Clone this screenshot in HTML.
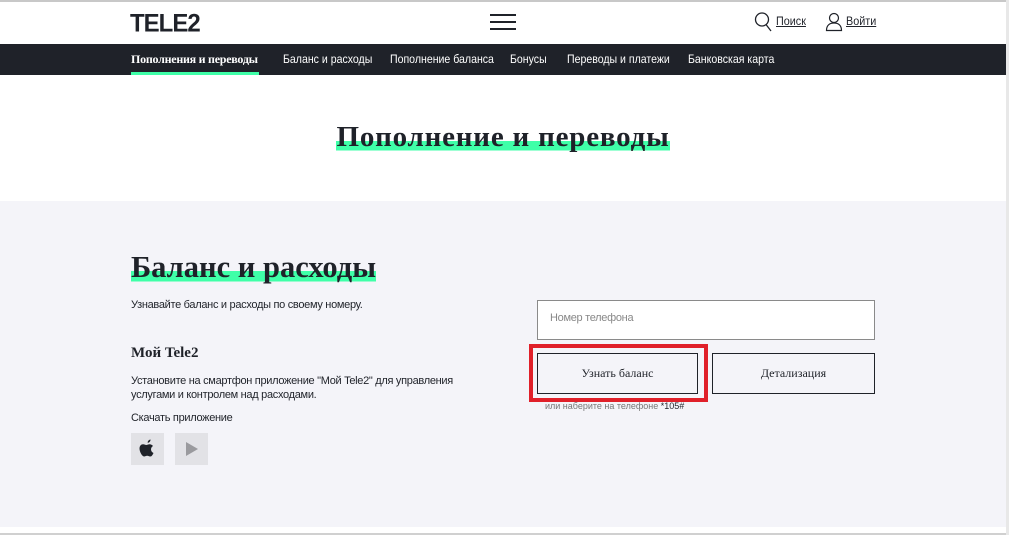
<!DOCTYPE html>
<html><head><meta charset="utf-8"><style>
*{margin:0;padding:0;box-sizing:border-box}
body{width:1009px;height:535px;overflow:hidden;background:#fff;font-family:"Liberation Sans",sans-serif;color:#1f2229;position:relative}
.a{position:absolute}
.hl{background:linear-gradient(to bottom,transparent 62%,#3fffa8 62%,#3fffa8 92%,transparent 92%)}
.serif{font-family:"Liberation Serif",serif;font-weight:bold}
.nav span{position:absolute;top:52px;font-size:12px;color:#fff;transform:scaleX(0.88);transform-origin:left top;white-space:nowrap}
</style></head><body>
<div class="a" style="left:0;top:0;width:1009px;height:2px;background:#c8c8c8"></div>
<div class="a" style="left:1006px;top:0;width:3px;height:535px;background:#e8e8e8"></div>
<div class="a" style="left:130px;top:10px;font-size:24px;font-weight:900;letter-spacing:-1px;color:#1f2229;transform:scaleY(1.05)">TELE2</div>
<div class="a" style="left:490px;top:14px;width:26px;height:2px;background:#1f2229"></div>
<div class="a" style="left:490px;top:21px;width:26px;height:2px;background:#1f2229"></div>
<div class="a" style="left:490px;top:28px;width:26px;height:2px;background:#1f2229"></div>
<svg class="a" style="left:753px;top:11px" width="20" height="22" viewBox="0 0 20 22"><circle cx="9" cy="8.5" r="6.5" fill="none" stroke="#1f2229" stroke-width="1.3"/><line x1="13" y1="13.5" x2="18" y2="20" stroke="#1f2229" stroke-width="1.3"/></svg>
<div class="a" style="left:776px;top:14px;font-size:12px;text-decoration:underline;transform:scaleX(0.9);transform-origin:left">Поиск</div>
<svg class="a" style="left:825px;top:12px" width="18" height="20" viewBox="0 0 18 20"><circle cx="9" cy="6" r="4.5" fill="none" stroke="#1f2229" stroke-width="1.2"/><path d="M1.5 18.5 C1.5 13 5 11 9 11 C13 11 16.5 13 16.5 18.5 Z" fill="none" stroke="#1f2229" stroke-width="1.2"/></svg>
<div class="a" style="left:846px;top:14px;font-size:12px;text-decoration:underline;transform:scaleX(0.9);transform-origin:left">Войти</div>
<div class="a" style="left:0;top:44px;width:1006px;height:31px;background:#1f2229"></div>
<div class="nav">
<span class="serif" style="left:131px;font-family:'Liberation Serif',serif;font-size:12px;transform:none;letter-spacing:-0.25px">Пополнения и переводы</span>
<span style="left:283px">Баланс и расходы</span>
<span style="left:390px">Пополнение баланса</span>
<span style="left:510px">Бонусы</span>
<span style="left:567px">Переводы и платежи</span>
<span style="left:688px">Банковская карта</span>
</div>
<div class="a" style="left:131px;top:72px;width:128px;height:3px;background:#3fffa8"></div>
<div class="a serif" style="left:0;width:1006px;top:121px;text-align:center;font-size:29px"><span class="hl" style="letter-spacing:0.8px">Пополнение и переводы</span></div>
<div class="a" style="left:0;top:201px;width:1006px;height:326px;background:#f4f4f9"></div>
<div class="a" style="left:0;top:533px;width:1006px;height:2px;background:#d0d0d0"></div>
<div class="a serif" style="left:131px;top:250px;font-size:30.5px"><span class="hl">Баланс и расходы</span></div>
<div class="a" style="left:131px;top:299px;font-size:11px;letter-spacing:-0.3px">Узнавайте баланс и расходы по своему номеру.</div>
<div class="a serif" style="left:131px;top:345px;font-size:15px">Мой Tele2</div>
<div class="a" style="left:131px;top:374px;font-size:11px;line-height:14px;letter-spacing:-0.3px">Установите на смартфон приложение "Мой Tele2" для управления<br>услугами и контролем над расходами.</div>
<div class="a" style="left:131px;top:412px;font-size:11px;letter-spacing:-0.3px">Скачать приложение</div>
<div class="a" style="left:131px;top:433px;width:33px;height:32px;background:#e2e2e6"></div>
<svg class="a" style="left:139px;top:439px" width="17" height="20" viewBox="0 0 17 20"><path d="M11.5 0.5c.2 1.5-1.2 3.3-2.8 3.3-.2-1.5 1.2-3.2 2.8-3.3zM14.5 14c-.8 1.8-1.7 3.5-3.2 3.5s-1.7-.8-3.1-.8-1.9.8-3.2.8C3.4 17.5.5 13.2.5 9.5c0-2.6 1.7-4.3 3.5-4.3 1.4 0 2.3.8 3.3.8s1.800-.8 3.4-.8c1.1 0 2.5.6 3.3 1.8-2.9 1.600-2.5 5.8.5 7z" fill="#1f2229"/></svg>
<div class="a" style="left:175px;top:433px;width:33px;height:32px;background:#e2e2e6"></div>
<svg class="a" style="left:185px;top:441px" width="14" height="16" viewBox="0 0 14 16"><path d="M1 1 L13 8 L1 15 Z" fill="#9a9a9e"/></svg>
<div class="a" style="left:537px;top:300px;width:338px;height:40px;background:#fff;border:1px solid #8a8a8a"></div>
<div class="a" style="left:550px;top:312px;font-size:11px;color:#888;letter-spacing:-0.3px">Номер телефона</div>
<div class="a" style="left:529px;top:344px;width:179px;height:58px;border:4px solid #e0202a"></div>
<div class="a serif" style="left:537px;top:353px;width:161px;height:41px;border:1px solid #1f2229;font-weight:normal;font-size:12px;text-align:center;line-height:39px">Узнать баланс</div>
<div class="a serif" style="left:712px;top:353px;width:163px;height:41px;border:1px solid #1f2229;font-weight:normal;font-size:12px;text-align:center;line-height:39px">Детализация</div>
<div class="a" style="left:545px;top:401px;font-size:9px;color:#777">или наберите на телефоне <span style="color:#1f2229">*105#</span></div>
</body></html>
